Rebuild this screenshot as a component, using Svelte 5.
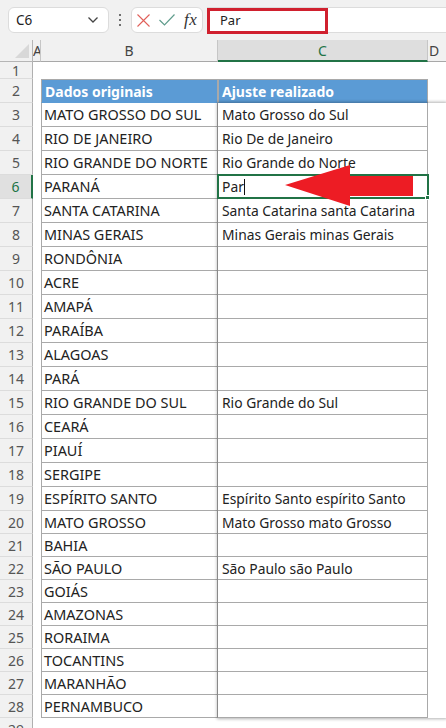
<script>
  const rows = [
    ['MATO GROSSO DO SUL', 'Mato Grosso do Sul'],
    ['RIO DE JANEIRO', 'Rio De de Janeiro'],
    ['RIO GRANDE DO NORTE', 'Rio Grande do Norte'],
    ['PARANÁ', 'Par'],
    ['SANTA CATARINA', 'Santa Catarina santa Catarina'],
    ['MINAS GERAIS', 'Minas Gerais minas Gerais'],
    ['RONDÔNIA', ''],
    ['ACRE', ''],
    ['AMAPÁ', ''],
    ['PARAÍBA', ''],
    ['ALAGOAS', ''],
    ['PARÁ', ''],
    ['RIO GRANDE DO SUL', 'Rio Grande do Sul'],
    ['CEARÁ', ''],
    ['PIAUÍ', ''],
    ['SERGIPE', ''],
    ['ESPÍRITO SANTO', 'Espírito Santo espírito Santo'],
    ['MATO GROSSO', 'Mato Grosso mato Grosso'],
    ['BAHIA', ''],
    ['SÃO PAULO', 'São Paulo são Paulo'],
    ['GOIÁS', ''],
    ['AMAZONAS', ''],
    ['RORAIMA', ''],
    ['TOCANTINS', ''],
    ['MARANHÃO', ''],
    ['PERNAMBUCO', '']
  ];
</script>

<div class="window">
  <div class="formula-bar">
    <div class="name-box">
      <span>C6</span>
      <svg width="12" height="8" viewBox="0 0 12 8"><path d="M1.5 1.5 6 6l4.5-4.5" fill="none" stroke="#444" stroke-width="1.3"/></svg>
    </div>
    <div class="dots"><i></i><i></i><i></i></div>
    <div class="fx-box">
      <svg width="13" height="13" viewBox="0 0 13 13"><path d="M.5.5l12 12M12.500.5l-12 12" fill="none" stroke="#e0605a" stroke-width="1.100"/></svg>
      <svg width="16" height="12" viewBox="0 0 16 12"><path d="M.5 6l5 5L15.500.5" fill="none" stroke="#5f9c8c" stroke-width="1.200"/></svg>
      <span class="fx">fx</span>
    </div>
    <div class="input">
      <div class="red-box">Par</div>
    </div>
  </div>

  <div class="sheet">
    <div class="corner"><span class="tri"></span></div>
    <div class="col-h a">A</div>
    <div class="col-h">B</div>
    <div class="col-h active">C</div>
    <div class="col-h d">D</div>

    <div class="num">1</div><div class="blank wide"></div>

    <div class="num">2</div><div class="blank"></div>
    <div class="th">Dados originais</div>
    <div class="th">Ajuste realizado</div>
    <div class="blank"></div>

    {#each rows as r, i}
      <div class="num" class:cur={i === 3}>{i + 3}</div>
      <div class="blank"></div>
      <div class="td b">{r[0]}</div>
      <div class="td c" class:sel={i === 3}>
        {r[1]}{#if i === 3}<span class="caret"></span><span class="handle"></span>{/if}
      </div>
      <div class="blank"></div>
    {/each}

    <div class="num">29</div><div class="blank wide"></div>

    <div class="shadow"></div>
  </div>

  <svg class="arrow" width="130" height="42" viewBox="0 0 130 42"><path d="M0 20 65 0v11h63v20H65v10z" fill="#ed1c24"/></svg>
</div>

<style>
  :global(body) { margin: 0; background: #f0f0f0; }
  .window {
    position: relative;
    width: 446px;
    height: 728px;
    overflow: hidden;
    background: #f1f1f1;
    font-family: "Noto Sans", "Open Sans", sans-serif;
    color: #222;
  }
  .formula-bar {
    display: flex;
    align-items: flex-start;
    height: 40px;
    padding: 7px 0 0 8px;
    box-sizing: border-box;
  }
  .name-box {
    display: flex;
    align-items: center;
    justify-content: space-between;
    width: 101px;
    height: 26px;
    box-sizing: border-box;
    padding: 0 9px 0 7px;
    background: #fff;
    border: 1px solid #dcdcdc;
    border-radius: 6px;
    font-size: 13.5px;
  }
  .dots {
    display: flex;
    flex-direction: column;
    gap: 2.500px;
    width: 22px;
    height: 26px;
    align-items: center;
    justify-content: center;
    box-sizing: border-box;
  }
  .dots i { width: 2.500px; height: 2.500px; border-radius: 50%; background: #444; }
  .fx-box {
    display: flex;
    align-items: center;
    width: 72px;
    height: 26px;
    box-sizing: border-box;
    padding: 0 0 0 5px;
    gap: 9px;
    background: #fff;
    border: 1px solid #dcdcdc;
    border-radius: 6px;
  }
  .fx {
    font-family: "Liberation Serif", serif;
    font-style: italic;
    font-size: 17px;
    color: #333;
    letter-spacing: 0.5px;
  }
  .input {
    flex: 1;
    margin-left: 4px;
    height: 26px;
    box-sizing: border-box;
    background: #fff;
    border-top: 1px solid #dcdcdc;
    border-bottom: 1px solid #dcdcdc;
  }
  .red-box {
    width: 121px;
    height: 26px;
    box-sizing: border-box;
    padding-left: 10px;
    border: 3px solid #d0202e;
    font-size: 13px;
    line-height: 19px;
  }
  .sheet {
    position: relative;
    display: grid;
    grid-template-columns: 33px 8px 177px 210px 18px;
    grid-template-rows: 22px 17px 24px repeat(17, 24px) repeat(9, 23px) 24px;
    font-size: 14px;
  }
  .corner {
    position: relative;
    border-right: 1px solid #b5b5b5;
    border-bottom: 1px solid #b5b5b5;
  }
  .tri {
    position: absolute;
    right: 3px;
    bottom: 3px;
    width: 0;
    height: 0;
    border-left: 14px solid transparent;
    border-bottom: 14px solid #d8d8d8;
  }
  .col-h {
    display: flex;
    align-items: center;
    justify-content: center;
    overflow: hidden;
    box-sizing: border-box;
    border-right: 1px solid #c6c6c6;
    border-bottom: 1px solid #a8a8a8;
    color: #444;
    font-size: 14px;
  }
  .col-h.a { justify-content: flex-start; }
  .col-h.d { justify-content: flex-start; border-right: 0; padding-left: 1px; }
  .col-h.active {
    background: #dedede;
    color: #217346;
    border-bottom: 2px solid #217346;
  }
  .num {
    display: flex;
    align-items: center;
    justify-content: center;
    box-sizing: border-box;
    border-right: 1px solid #b0b0b0;
    border-bottom: 1px solid #dcdcdc;
    color: #555;
    font-size: 14px;
  }
  .num.cur {
    background: #e0e0e0;
    color: #217346;
    border-right: 2px solid #217346;
  }
  .blank { background: #fff; }
  .blank.wide { grid-column: 2 / 6; }
  .th {
    display: flex;
    align-items: center;
    box-sizing: border-box;
    padding-left: 3px;
    background: #5b9bd5;
    color: #fff;
    font-weight: 700;
    border: 1px solid #a9a9a9;
    border-bottom-color: #5b9bd5;
  }
  .td {
    display: flex;
    align-items: center;
    box-sizing: border-box;
    background: #fff;
    white-space: nowrap;
    border-bottom: 1px solid #a9a9a9;
    border-right: 1px solid #a9a9a9;
    color: #222;
  }
  .td.b { padding-left: 2px; border-left: 1px solid #a9a9a9; font-size: 14.45px; }
  .td.c { padding-left: 4px; font-size: 13.85px; }
  .td.sel {
    position: relative;
    z-index: 2;
    margin: -1px -1px 0 -1px;
    padding-left: 3px;
    border: 2px solid #217346;
  }
  .caret {
    display: inline-block;
    width: 1px;
    height: 16px;
    background: #111;
  }
  .handle {
    position: absolute;
    right: -3px;
    bottom: -3px;
    width: 5px;
    height: 5px;
    background: #217346;
    border: 1px solid #fff;
    box-sizing: border-box;
  }
  .shadow {
    position: absolute;
    inset: 0;
    grid-column: 4;
    grid-row: 4 / 30;
    z-index: 1;
    pointer-events: none;
    box-shadow: 0 0 3px 1px rgba(0,0,0,.3);
  }
  .arrow {
    position: absolute;
    left: 285px;
    top: 165px;
    z-index: 5;
  }
</style>
